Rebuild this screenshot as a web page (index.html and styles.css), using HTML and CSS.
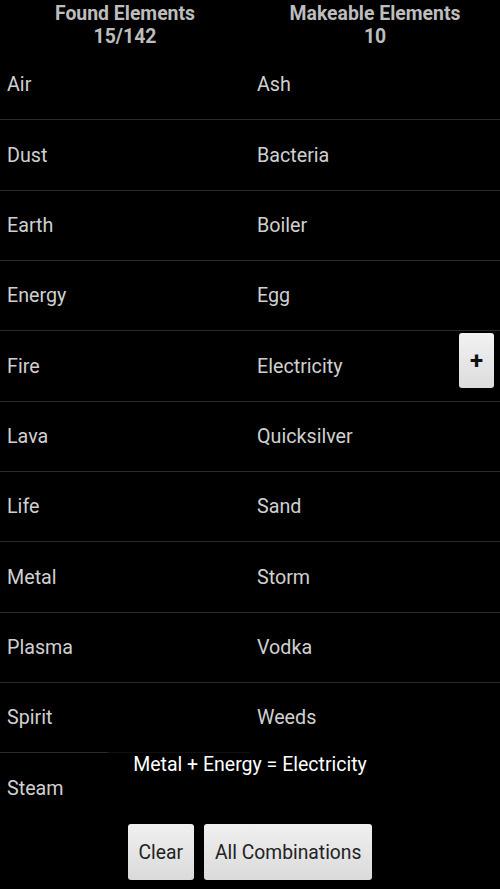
FILE: index.html
```html
<!DOCTYPE html>
<html>
<head>
<meta charset="utf-8">
<link rel="stylesheet" href="styles.css">
</head>
<body>
<div class="app">
  <div class="header">
    <div class="head-col">Found Elements<br>15/142</div>
    <div class="head-col">Makeable Elements<br>10</div>
  </div>
  <div class="lists">
    <ul class="list">
      <li>Air</li><li>Dust</li><li>Earth</li><li>Energy</li><li>Fire</li><li>Lava</li><li>Life</li><li>Metal</li><li>Plasma</li><li>Spirit</li><li>Steam</li>
    </ul>
    <ul class="list">
      <li>Ash</li><li>Bacteria</li><li>Boiler</li><li>Egg</li><li>Electricity</li><li>Quicksilver</li><li>Sand</li><li>Storm</li><li>Vodka</li><li>Weeds</li>
    </ul>
  </div>
  <div class="plus">+</div>
  <div class="result">Metal + Energy = Electricity</div>
  <div class="actions">
    <button class="btn">Clear</button>
    <button class="btn">All Combinations</button>
  </div>
</div>
</body>
</html>
```
FILE: styles.css
```css
html, body {
  margin: 0;
  padding: 0;
  background: #000;
  height: 889px;
  overflow: hidden;
}
.app {
  position: relative;
  width: 500px;
  height: 889px;
  font-family: Roboto, "Noto Sans", sans-serif;
}
.header {
  display: grid;
  grid-template-columns: 250px 250px;
  height: 49px;
  box-sizing: border-box;
  padding-top: 2px;
}
.head-col {
  text-align: center;
  color: #bdbdbd;
  font-weight: bold;
  font-size: 19.4px;
  line-height: 23px;
}
.lists {
  display: grid;
  grid-template-columns: 250px 250px;
  align-items: start;
}
.list {
  list-style: none;
  margin: 0;
  padding: 0;
}
.list li {
  height: 69.35px;
  border-bottom: 1px solid #2a2a2a;
  display: flex;
  align-items: center;
  box-sizing: content-box;
  padding-left: 7px;
  padding-top: 1px;
  margin-bottom: -1px;
  color: #d0d0d0;
  font-size: 19.7px;
}
.list li:last-child {
  border-bottom: none;
}
.plus {
  position: absolute;
  left: 459px;
  top: 333px;
  width: 35px;
  height: 55px;
  border-radius: 3px;
  background: linear-gradient(#f2f2f2, #dcdcdc);
  display: flex;
  align-items: center;
  justify-content: center;
  color: #111;
  font-weight: bold;
  font-size: 24px;
}
.result {
  position: absolute;
  left: 108px;
  width: 284px;
  top: 751px;
  height: 28px;
  padding-top: 1px;
  box-sizing: border-box;
  background: rgba(0, 0, 0, 0.6);
  color: #fff;
  text-align: center;
  font-size: 19.5px;
  line-height: 25px;
}
.actions {
  position: absolute;
  left: 0;
  right: 0;
  top: 824px;
  display: flex;
  justify-content: center;
  gap: 10px;
}
.btn {
  height: 56px;
  border: none;
  border-radius: 3px;
  background: linear-gradient(#f0f0f0, #dadada);
  color: #222;
  font-family: Roboto, "Noto Sans", sans-serif;
  font-size: 19.3px;
  padding: 0 11px;
  margin: 0;
}
```
